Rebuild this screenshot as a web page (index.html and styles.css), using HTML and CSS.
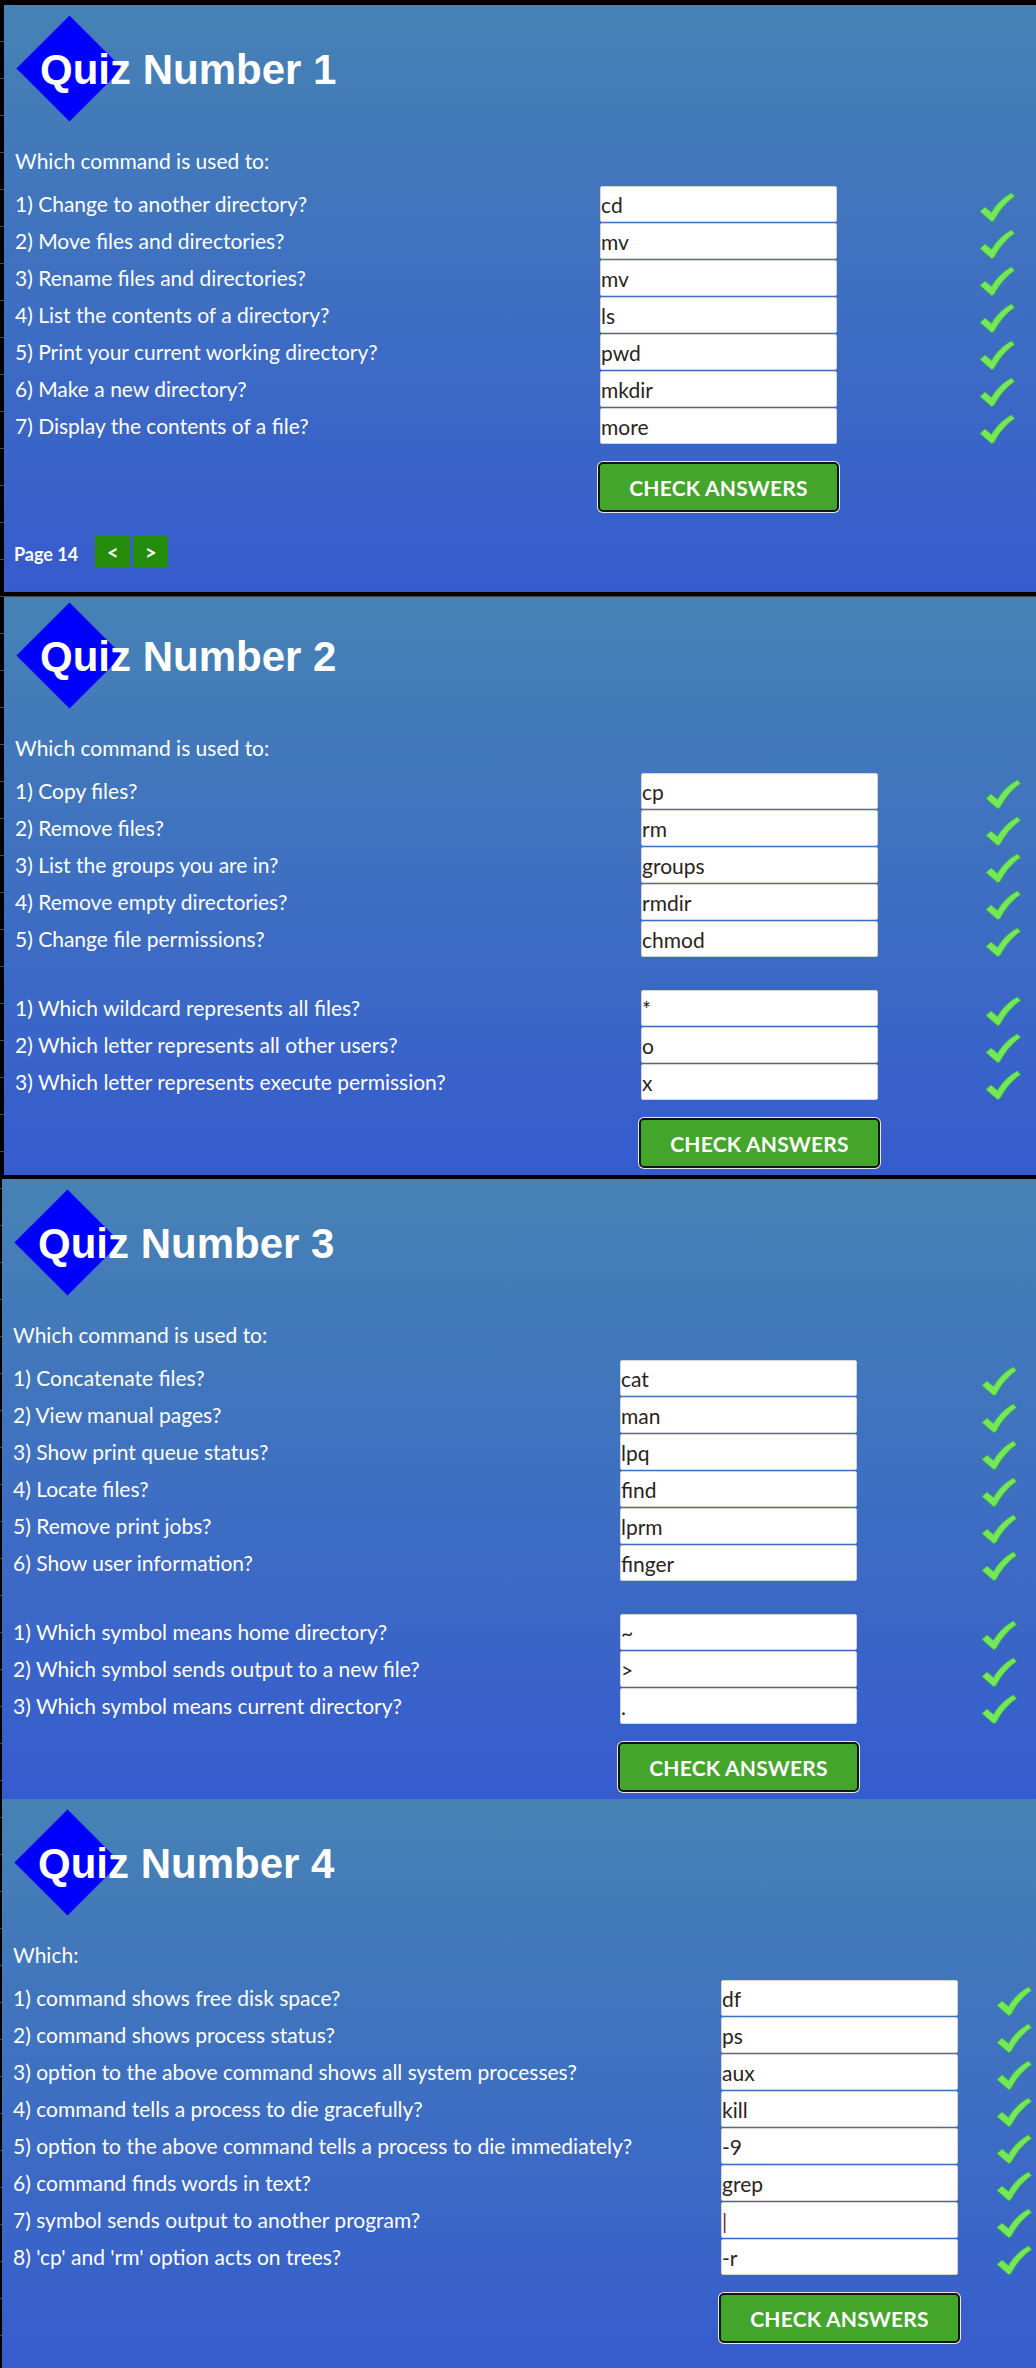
FILE: index.html
```html
<!DOCTYPE html>
<html lang="en">
<head>
<meta charset="utf-8">
<title>Quizzes</title>
<link rel="stylesheet" href="styles.css">
</head>
<body>
<svg class="defs" width="0" height="0" aria-hidden="true">
  <symbol id="tick" viewBox="0 0 36 30">
    <path d="M1 19.5 L6 15 L12.5 20.5 C17 12.5 24 5.5 32.5 1 L35.5 4.5 C27.5 10 20.5 18 15 28.5 L12.5 29.5 Z" fill="#72e85a" stroke="#48b83a" stroke-width="1" stroke-linejoin="round"/>
  </symbol>
</svg>

<main class="page">

  <section class="quiz quiz-1">
    <header class="quiz-head">
      <span class="diamond"></span>
      <h1 class="quiz-title">Quiz Number 1</h1>
    </header>
    <p class="intro">Which command is used to:</p>
    <div class="qgrid">
      <span class="label">1) Change to another directory?</span><input class="answer" type="text" value="cd"><svg class="tick"><use href="#tick"/></svg>
      <span class="label">2) Move files and directories?</span><input class="answer" type="text" value="mv"><svg class="tick"><use href="#tick"/></svg>
      <span class="label">3) Rename files and directories?</span><input class="answer" type="text" value="mv"><svg class="tick"><use href="#tick"/></svg>
      <span class="label">4) List the contents of a directory?</span><input class="answer" type="text" value="ls"><svg class="tick"><use href="#tick"/></svg>
      <span class="label">5) Print your current working directory?</span><input class="answer" type="text" value="pwd"><svg class="tick"><use href="#tick"/></svg>
      <span class="label">6) Make a new directory?</span><input class="answer" type="text" value="mkdir"><svg class="tick"><use href="#tick"/></svg>
      <span class="label">7) Display the contents of a file?</span><input class="answer" type="text" value="more"><svg class="tick"><use href="#tick"/></svg>
    </div>
    <div class="qgrid actions">
      <span></span><button class="check-btn" type="button">CHECK ANSWERS</button>
    </div>
    <nav class="pager">
      <span class="page-no">Page 14</span>
      <button class="nav-btn" type="button">&lt;</button>
      <button class="nav-btn" type="button">&gt;</button>
    </nav>
  </section>

  <section class="quiz quiz-2">
    <header class="quiz-head">
      <span class="diamond"></span>
      <h1 class="quiz-title">Quiz Number 2</h1>
    </header>
    <p class="intro">Which command is used to:</p>
    <div class="qgrid">
      <span class="label">1) Copy files?</span><input class="answer" type="text" value="cp"><svg class="tick"><use href="#tick"/></svg>
      <span class="label">2) Remove files?</span><input class="answer" type="text" value="rm"><svg class="tick"><use href="#tick"/></svg>
      <span class="label">3) List the groups you are in?</span><input class="answer" type="text" value="groups"><svg class="tick"><use href="#tick"/></svg>
      <span class="label">4) Remove empty directories?</span><input class="answer" type="text" value="rmdir"><svg class="tick"><use href="#tick"/></svg>
      <span class="label">5) Change file permissions?</span><input class="answer" type="text" value="chmod"><svg class="tick"><use href="#tick"/></svg>
    </div>
    <div class="qgrid group-2">
      <span class="label">1) Which wildcard represents all files?</span><input class="answer small" type="text" value="*"><svg class="tick"><use href="#tick"/></svg>
      <span class="label">2) Which letter represents all other users?</span><input class="answer" type="text" value="o"><svg class="tick"><use href="#tick"/></svg>
      <span class="label">3) Which letter represents execute permission?</span><input class="answer" type="text" value="x"><svg class="tick"><use href="#tick"/></svg>
    </div>
    <div class="qgrid actions">
      <span></span><button class="check-btn" type="button">CHECK ANSWERS</button>
    </div>
  </section>

  <section class="quiz quiz-3">
    <header class="quiz-head">
      <span class="diamond"></span>
      <h1 class="quiz-title">Quiz Number 3</h1>
    </header>
    <p class="intro">Which command is used to:</p>
    <div class="qgrid">
      <span class="label">1) Concatenate files?</span><input class="answer" type="text" value="cat"><svg class="tick"><use href="#tick"/></svg>
      <span class="label">2) View manual pages?</span><input class="answer" type="text" value="man"><svg class="tick"><use href="#tick"/></svg>
      <span class="label">3) Show print queue status?</span><input class="answer" type="text" value="lpq"><svg class="tick"><use href="#tick"/></svg>
      <span class="label">4) Locate files?</span><input class="answer" type="text" value="find"><svg class="tick"><use href="#tick"/></svg>
      <span class="label">5) Remove print jobs?</span><input class="answer" type="text" value="lprm"><svg class="tick"><use href="#tick"/></svg>
      <span class="label">6) Show user information?</span><input class="answer" type="text" value="finger"><svg class="tick"><use href="#tick"/></svg>
    </div>
    <div class="qgrid group-2">
      <span class="label">1) Which symbol means home directory?</span><input class="answer" type="text" value="~"><svg class="tick"><use href="#tick"/></svg>
      <span class="label">2) Which symbol sends output to a new file?</span><input class="answer" type="text" value="&gt;"><svg class="tick"><use href="#tick"/></svg>
      <span class="label">3) Which symbol means current directory?</span><input class="answer" type="text" value="."><svg class="tick"><use href="#tick"/></svg>
    </div>
    <div class="qgrid actions">
      <span></span><button class="check-btn" type="button">CHECK ANSWERS</button>
    </div>
  </section>

  <section class="quiz quiz-4">
    <header class="quiz-head">
      <span class="diamond"></span>
      <h1 class="quiz-title">Quiz Number 4</h1>
    </header>
    <p class="intro">Which:</p>
    <div class="qgrid">
      <span class="label">1) command shows free disk space?</span><input class="answer" type="text" value="df"><svg class="tick"><use href="#tick"/></svg>
      <span class="label">2) command shows process status?</span><input class="answer" type="text" value="ps"><svg class="tick"><use href="#tick"/></svg>
      <span class="label">3) option to the above command shows all system processes?</span><input class="answer" type="text" value="aux"><svg class="tick"><use href="#tick"/></svg>
      <span class="label">4) command tells a process to die gracefully?</span><input class="answer" type="text" value="kill"><svg class="tick"><use href="#tick"/></svg>
      <span class="label">5) option to the above command tells a process to die immediately?</span><input class="answer" type="text" value="-9"><svg class="tick"><use href="#tick"/></svg>
      <span class="label">6) command finds words in text?</span><input class="answer" type="text" value="grep"><svg class="tick"><use href="#tick"/></svg>
      <span class="label">7) symbol sends output to another program?</span><input class="answer pipe" type="text" value="|"><svg class="tick"><use href="#tick"/></svg>
      <span class="label">8) 'cp' and 'rm' option acts on trees?</span><input class="answer" type="text" value="-r"><svg class="tick"><use href="#tick"/></svg>
    </div>
    <div class="qgrid actions">
      <span></span><button class="check-btn" type="button">CHECK ANSWERS</button>
    </div>
  </section>

</main>
</body>
</html>
```

FILE: styles.css
```css
html, body {
  margin: 0;
  padding: 0;
}

body {
  background-color: #000;
  background-image: repeating-linear-gradient(to bottom, transparent 0, transparent 36px, #4a4a4a 36px, #4a4a4a 37px);
  background-position: 0 5px;
  font-family: "Lato", "Liberation Sans", sans-serif;
  color: #fff;
}

.defs {
  position: absolute;
  width: 0;
  height: 0;
  overflow: hidden;
}

.page {
  display: flex;
  flex-direction: column;
  padding-top: 5px;
}

.quiz {
  background: linear-gradient(to bottom, #4682b4 0%, #3e6fc2 50%, #365bce 100%);
  margin-left: 4px;
  padding: 10px 0 7px 0;
  --label: 585px;
  --gap: 142px;
}

.quiz-1 {
  margin-bottom: 5px;
  padding-bottom: 0;
}

.quiz-2 {
  margin-bottom: 4px;
  padding-top: 5px;
  --label: 626px;
  --gap: 107px;
}

.quiz-3 {
  margin-left: 2px;
  --label: 607px;
  --gap: 124px;
}

.quiz-4 {
  margin-left: 2px;
  padding-bottom: 40px;
  --label: 708px;
  --gap: 38px;
}

.quiz-head {
  display: grid;
  height: 106px;
}

.diamond {
  grid-area: 1 / 1;
  width: 106px;
  height: 106px;
  margin-left: 12px;
  display: flex;
  align-items: center;
  justify-content: center;
}

.diamond::before {
  content: "";
  width: 75px;
  height: 75px;
  background: #0000ff;
  transform: rotate(45deg);
}

.quiz-title {
  grid-area: 1 / 1;
  z-index: 1;
  margin: 34px 0 0 36px;
  align-self: start;
  font-family: "Liberation Sans", Arial, sans-serif;
  font-weight: bold;
  font-size: 42px;
  line-height: 42px;
  color: #fff;
}

.intro {
  margin: 28px 0 13px 11px;
  font-size: 21px;
  line-height: 24px;
}

.qgrid {
  display: grid;
  grid-template-columns: var(--label) 237px var(--gap) 36px;
  grid-auto-rows: 36px;
  row-gap: 1px;
  padding-left: 11px;
  align-items: center;
}

.group-2 {
  margin-top: 33px;
}

.label {
  font-size: 21px;
  line-height: 24px;
  white-space: nowrap;
}

.answer {
  box-sizing: border-box;
  width: 237px;
  height: 36px;
  margin: 0;
  padding: 0;
  border: 1px solid #d4d4d4;
  border-radius: 2px;
  background: #fff;
  color: #2b2320;
  font-family: "Lato", "Liberation Sans", sans-serif;
  font-size: 21px;
  line-height: 25px;
  outline: none;
}

.answer.pipe {
  color: #7a1f10;
}

.tick {
  grid-column: 4;
  width: 36px;
  height: 30px;
  align-self: end;
  margin-bottom: 0;
}

.actions {
  margin-top: 18px;
  grid-auto-rows: 50px;
}

.check-btn {
  grid-column: 2;
  justify-self: center;
  box-sizing: border-box;
  width: 241px;
  height: 50px;
  margin: 0;
  padding: 0;
  background: #43a52a;
  border: 2px solid #141414;
  border-radius: 5px;
  box-shadow: 0 0 0 1px #e8e8e8;
  color: #fff;
  font-family: "Lato", "Liberation Sans", sans-serif;
  font-weight: bold;
  font-size: 21px;
  letter-spacing: 0.2px;
}

.pager {
  display: flex;
  align-items: center;
  height: 32px;
  margin: 24px 0 24px 10px;
}

.page-no {
  font-weight: bold;
  font-size: 18px;
  line-height: 22px;
  padding-top: 3px;
  margin-right: 17px;
}

.nav-btn {
  width: 35px;
  height: 32px;
  margin: 0 3px 0 0;
  padding: 0;
  border: none;
  border-radius: 2px;
  background: #258b0b;
  color: #fff;
  font-family: "Lato", "Liberation Sans", sans-serif;
  font-weight: bold;
  font-size: 20px;
  line-height: 32px;
}
```
